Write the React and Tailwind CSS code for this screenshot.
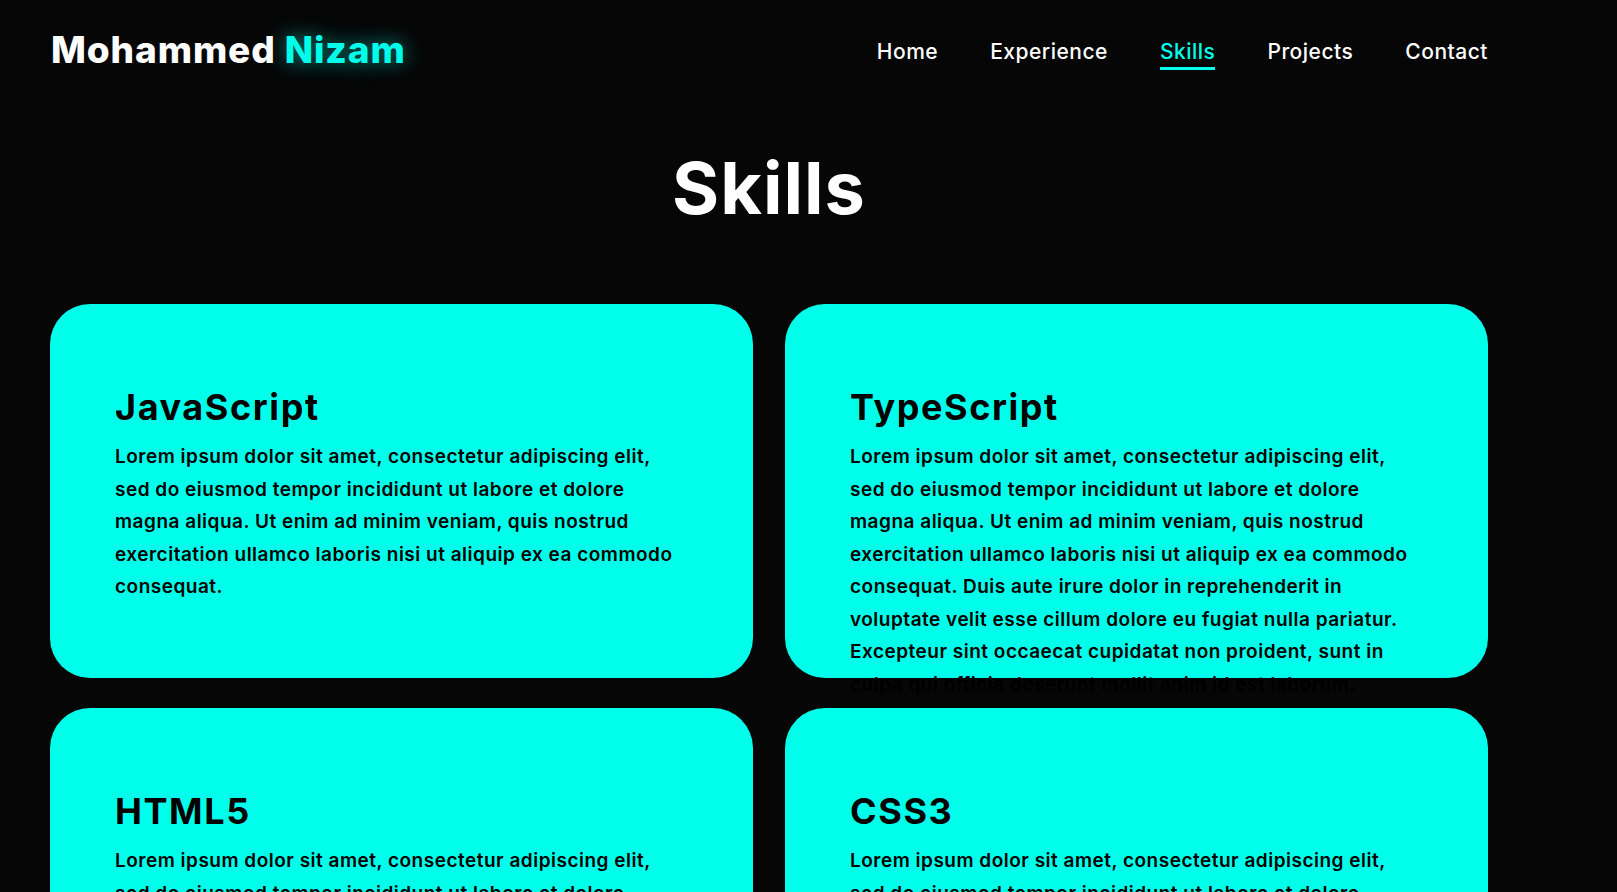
import React from "react";

const lorem = [
  "Lorem ipsum dolor sit amet, consectetur adipiscing elit,",
  "sed do eiusmod tempor incididunt ut labore et dolore",
  "magna aliqua. Ut enim ad minim veniam, quis nostrud",
  "exercitation ullamco laboris nisi ut aliquip ex ea commodo",
  "consequat.",
];
const loremLong = [
  "Lorem ipsum dolor sit amet, consectetur adipiscing elit,",
  "sed do eiusmod tempor incididunt ut labore et dolore",
  "magna aliqua. Ut enim ad minim veniam, quis nostrud",
  "exercitation ullamco laboris nisi ut aliquip ex ea commodo",
  "consequat. Duis aute irure dolor in reprehenderit in",
  "voluptate velit esse cillum dolore eu fugiat nulla pariatur.",
  "Excepteur sint occaecat cupidatat non proident, sunt in",
  "culpa qui officia deserunt mollit anim id est laborum.",
];

const skills = [
  { title: "JavaScript", lines: lorem },
  { title: "TypeScript", lines: loremLong },
  { title: "HTML5", lines: lorem },
  { title: "CSS3", lines: lorem },
];

const navItems = ["Home", "Experience", "Skills", "Projects", "Contact"];

function Card({ title, lines }) {
  return (
    <div className="h-[374px] rounded-[40px] bg-[#00ffea] pl-[65px] pr-[20px] pt-[82px]">
      <h2 className="text-[36px] font-bold leading-[1.2] tracking-[1.6px] text-black">{title}</h2>
      <p className="mt-[12px] text-[19px] font-semibold leading-[32.5px] tracking-[0.5px] text-black">
        {lines.map((l, i) => (
          <span key={i} className="block whitespace-nowrap">
            {l}
          </span>
        ))}
      </p>
    </div>
  );
}

export default function App() {
  return (
    <div className="min-h-screen overflow-hidden bg-[#060606] font-['Inter','Noto_Sans',sans-serif]">
      <header className="flex h-[100px] items-center justify-between pl-[51px] pr-[129px]">
        <div className="text-[37px] font-extrabold tracking-[0.9px] text-white">
          Mohammed{" "}
          <span className="text-[#00ffea] [text-shadow:0_0_20px_rgba(0,255,234,0.6)]">Nizam</span>
        </div>
        <nav className="mt-[3px] flex items-center gap-[52px]">
          {navItems.map((item) => (
            <a
              key={item}
              className={
                item === "Skills"
                  ? "relative text-[21px] font-medium tracking-[0.5px] text-[#00ffea]"
                  : "text-[21px] font-medium tracking-[0.5px] text-white"
              }
            >
              {item}
              {item === "Skills" && (
                <span className="absolute left-0 right-0 top-[100%] h-[3px] bg-[#00ffea]" />
              )}
            </a>
          ))}
        </nav>
      </header>
      <main className="pl-[50px] pr-[129px]">
        <h1 className="mt-[52px] text-center text-[72px] font-bold leading-none tracking-[1px] text-white">
          Skills
        </h1>
        <div className="mt-[80px] grid grid-cols-2 gap-x-[32px] gap-y-[30px]">
          {skills.map((s) => (
            <Card key={s.title} {...s} />
          ))}
        </div>
      </main>
    </div>
  );
}
